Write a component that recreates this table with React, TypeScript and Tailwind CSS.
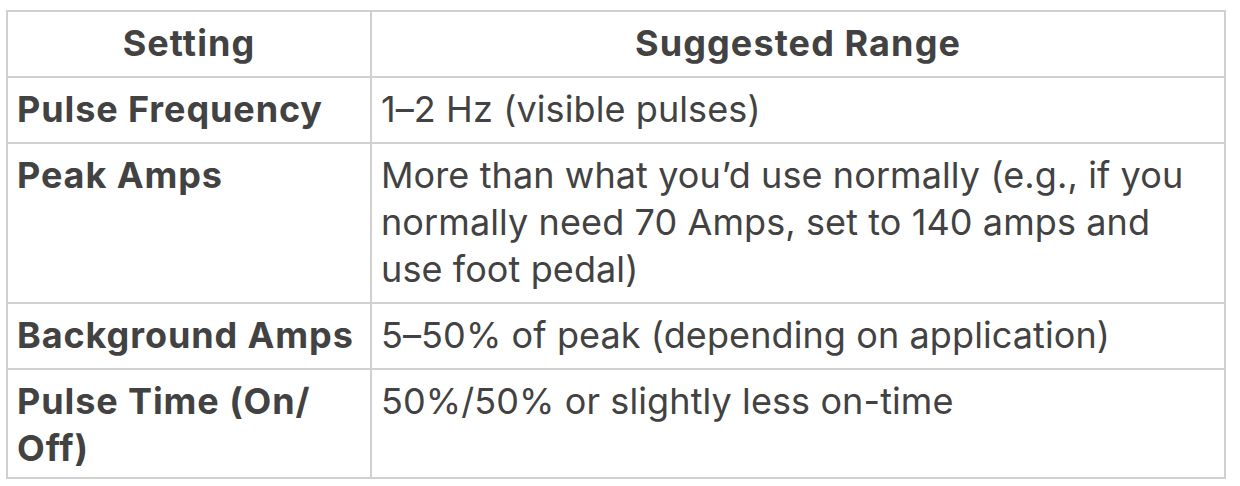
const rows: { setting: string; range: string }[] = [
  { setting: "Pulse Frequency", range: "1–2 Hz (visible pulses)" },
  {
    setting: "Peak Amps",
    range:
      "More than what you’d use normally (e.g., if you normally need 70 Amps, set to 140 amps and use foot pedal)",
  },
  { setting: "Background Amps", range: "5–50% of peak (depending on application)" },
  { setting: "Pulse Time (On/\u200bOff)", range: "50%/50% or slightly less on-time" },
];

export default function App() {
  return (
    <div className="w-[1240px] h-[486px] bg-white pt-[10px] pl-[6px] font-['Inter',sans-serif] text-[#424242]">
      <table className="w-[1220px] border-collapse table-fixed text-[36px] leading-[47px]">
        <colgroup>
          <col className="w-[364px]" />
          <col />
        </colgroup>
        <thead>
          <tr>
            <th className="border-2 border-[#d0d0d0] px-[9px] pt-[8px] pb-[9px] font-bold tracking-[1.1px] text-center">
              Setting
            </th>
            <th className="border-2 border-[#d0d0d0] px-[9px] pt-[8px] pb-[9px] font-bold tracking-[1.1px] text-center">
              Suggested Range
            </th>
          </tr>
        </thead>
        <tbody>
          {rows.map((r, i) => (
            <tr key={r.setting} className={i === rows.length - 1 ? "[&>td]:pb-[5px]" : ""}>
              <td className="border-2 border-[#d0d0d0] px-[9px] pt-[8px] pb-[9px] font-bold tracking-[0.9px] align-top">
                {r.setting}
              </td>
              <td className="border-2 border-[#d0d0d0] px-[9px] pt-[8px] pb-[9px] tracking-[0.1px] align-top">
                {r.range}
              </td>
            </tr>
          ))}
        </tbody>
      </table>
    </div>
  );
}
